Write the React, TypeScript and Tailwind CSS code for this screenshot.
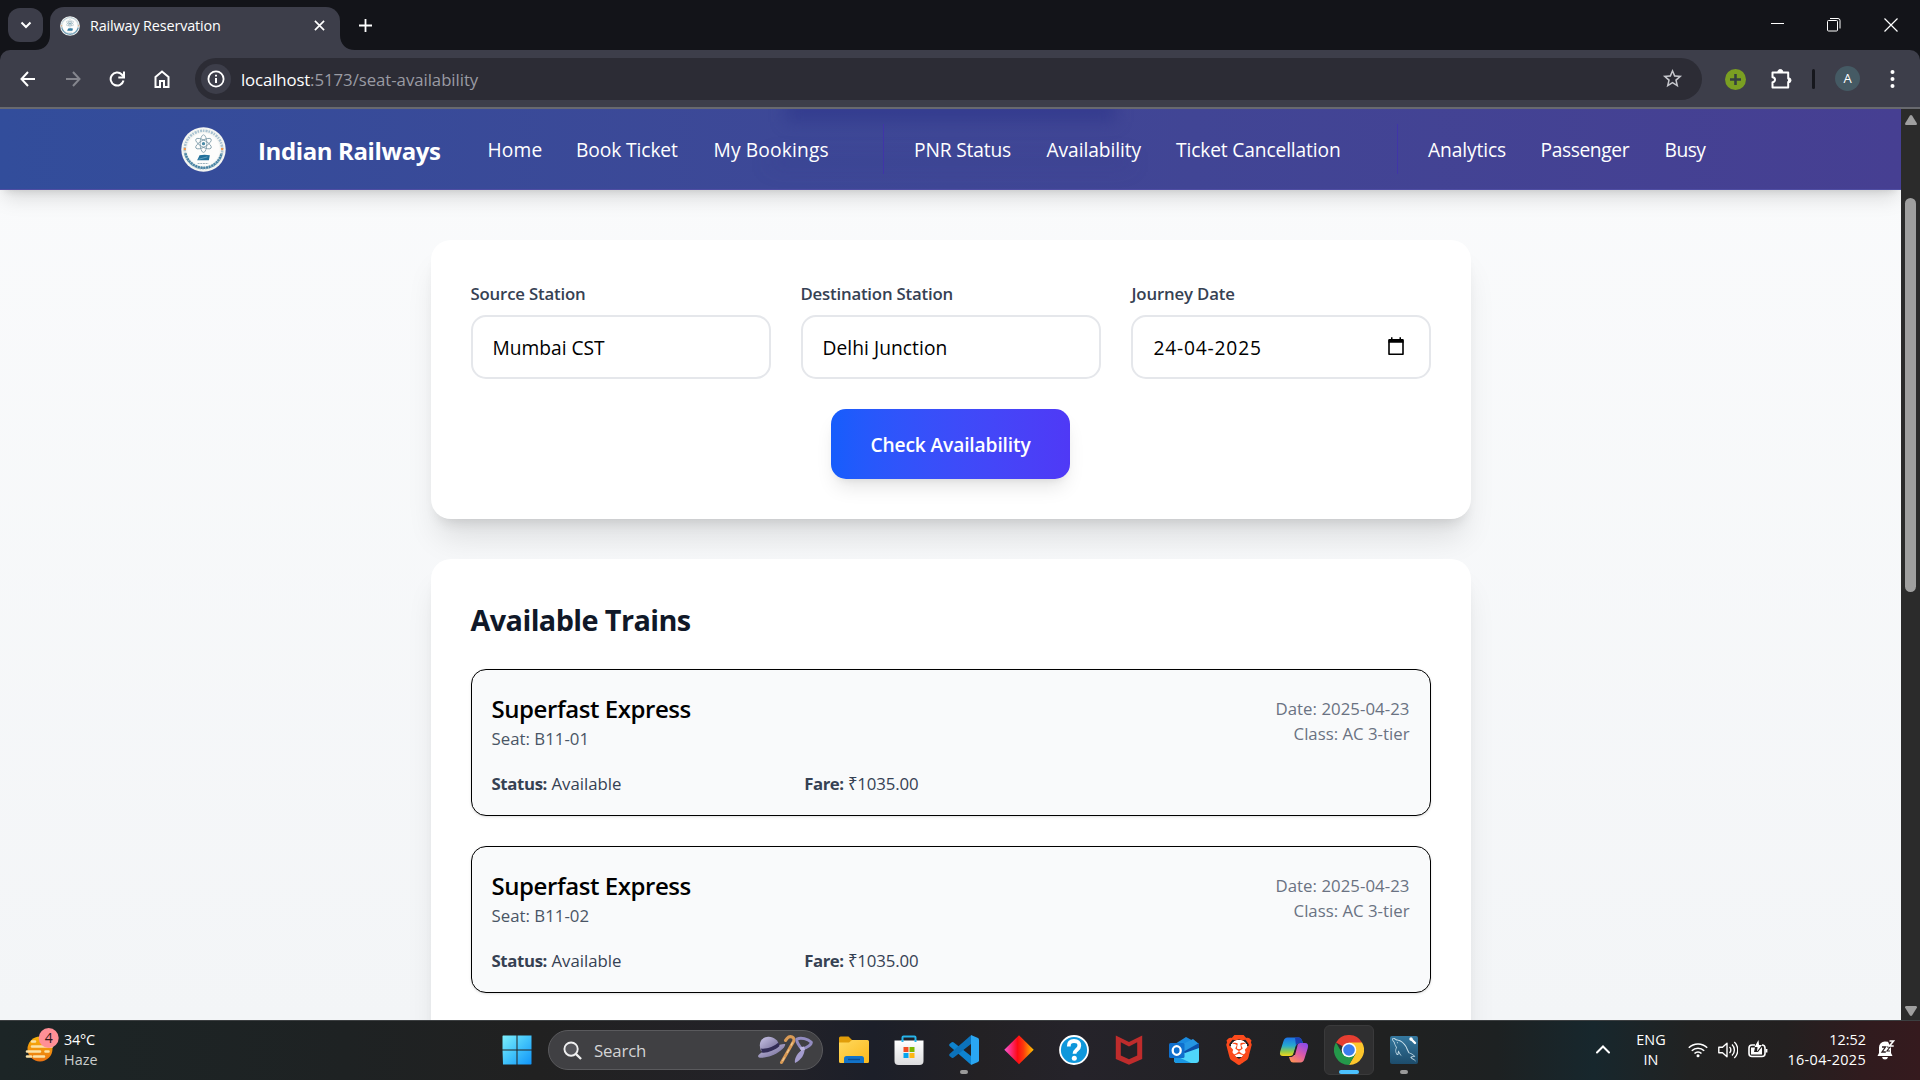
import React from "react";
import { SiBrave } from "react-icons/si";
import { GrMysql } from "react-icons/gr";
import { MdStarBorder } from "react-icons/md";

function Seal({ className }: { className: string }) {
  return (
    <svg viewBox="0 0 46 46" className={className}>
      <circle cx="23" cy="23" r="22.7" fill="#f4f5f2" />
      <circle cx="23" cy="23" r="19.2" fill="none" stroke="#4e86a8" strokeWidth="2.600" strokeDasharray="1.5 1.1 2.2 .9" pathLength="120" strokeDashoffset="-4" opacity=".45" />
      <circle cx="23" cy="23" r="16.6" fill="#fdfdfc" />
      <path d="M4.500 27a19 19 0 0 0 37 0" fill="none" stroke="#2f7398" strokeWidth="2.600" strokeDasharray="2 .8" opacity=".85" />
      <circle cx="3.9" cy="22.5" r="1.3" fill="#f0954a" />
      <circle cx="42.1" cy="22.5" r="1.3" fill="#f0954a" />
      <g fill="none" stroke="#7897a5" strokeWidth=".8">
        <ellipse cx="23" cy="17" rx="3.4" ry="9" />
        <ellipse cx="23" cy="17" rx="3.4" ry="9" transform="rotate(60 23 17)" />
        <ellipse cx="23" cy="17" rx="3.4" ry="9" transform="rotate(-60 23 17)" />
      </g>
      <circle cx="23" cy="17" r="1.7" fill="#4a8aa6" />
      <path d="M19 29l5-.6 5.5.4-1 5.2H16.5z" fill="#22709a" />
      <path d="M18 33l9-2.5" stroke="#8cc0d8" strokeWidth=".6" />
      <path d="M17 37.3h11" stroke="#9db3bd" strokeWidth="1.2" strokeDasharray="2 .7" />
    </svg>
  );
}

function TabStrip() {
  return (
    <div className="flex h-[50px] bg-[#131419]">
      <div className="ml-2 mt-2 flex h-[34px] w-[35px] items-center justify-center rounded-[12px] bg-[#3c3d49]">
        <svg viewBox="0 0 12 8" className="h-[8px] w-[12px]" fill="none" stroke="#fff" strokeWidth="2"><path d="M1.5 1.5L6 6l4.500-4.500" /></svg>
      </div>
      <svg viewBox="0 0 15 15" className="-ml-[8px] mt-[35px] h-[15px] w-[15px]" fill="#3d3e4a"><path d="M15 0v15H0C9 15 15 9 15 0z" /></svg>
      <div className="mt-[7px] flex h-[43px] w-[290px] items-center rounded-t-[14px] bg-[#3d3e4a] pb-[6px]">
        <Seal className="ml-[10px] h-5 w-5" />
        <span className="ml-[10px] w-[224px] text-[14.4px] tracking-[-0.010em] text-white">Railway Reservation</span>
        <svg viewBox="0 0 12 12" className="h-[11px] w-[11px]" stroke="#fff" strokeWidth="1.8"><path d="M1 1l10 10M11 1L1 11" /></svg>
      </div>
      <svg viewBox="0 0 15 15" className="mt-[35px] h-[15px] w-[15px]" fill="#3d3e4a"><path d="M0 0v15h15C6 15 0 9 0 0z" /></svg>
      <svg viewBox="0 0 13 13" className="ml-[4px] mt-[19px] h-[13px] w-[13px]" stroke="#fff" strokeWidth="1.8"><path d="M6.500 0v13M0 6.500h13" /></svg>
      <div className="ml-auto mr-[22px] flex pt-[18px]">
        <svg viewBox="0 0 14 14" className="mr-[42px] h-[14px] w-[14px]" stroke="#fff" strokeWidth="1"><path d="M0 5.500h13" /></svg>
        <svg viewBox="0 0 14 14" className="mr-[43px] h-[14px] w-[14px]" fill="none" stroke="#fff" strokeWidth="1"><rect x=".5" y="2.500" width="10" height="10.500" rx="1" /><path d="M3 .5h8q2 0 2 2v8" /></svg>
        <svg viewBox="0 0 14 14" className="h-[14px] w-[14px]" stroke="#fff" strokeWidth="1.2"><path d="M.5.5l13 13M13.500.5l-13 13" /></svg>
      </div>
    </div>
  );
}

function Toolbar() {
  return (
    <div className="h-[59px] bg-[#131419]">
      <div className="flex h-[59px] items-center rounded-t-[10px] border-b-2 border-[#68696f] bg-[#3d3e4a] text-white">
        <svg viewBox="0 0 16 16" className="ml-[20px] h-[16px] w-[16px]" fill="none" stroke="#fff" strokeWidth="2"><path d="M15 8H1.500M8 1L1.500 8 8 15" /></svg>
        <svg viewBox="0 0 16 16" className="ml-[29px] h-[16px] w-[16px]" fill="none" stroke="#85868e" strokeWidth="2"><path d="M1 8h13.500M8 1l6.500 7L8 15" /></svg>
        <svg viewBox="0 0 16 16" className="ml-[28px] h-[16px] w-[16px]" fill="none" stroke="#fff" strokeWidth="2"><path d="M14.500 9.500A6.500 6.500 0 1 1 12.800 3.500L14.500 5.500" /><path d="M15 .5v6H9.300" /></svg>
        <svg viewBox="0 0 16 18" className="ml-[29px] h-[18px] w-[16px]" fill="none" stroke="#fff" strokeWidth="2"><path d="M1.500 7L8 1.500 14.500 7v10H10v-6H6v6H1.500z" /></svg>
        <div className="ml-[25px] flex h-[42px] w-[1507px] items-center rounded-full bg-[#2c2c35] pl-[6px]">
          <div className="flex h-[30px] w-[30px] items-center justify-center rounded-full bg-[#3d3e4a]">
            <svg viewBox="0 0 18 18" className="h-[18px] w-[18px]" fill="none" stroke="#fff" strokeWidth="1.800"><circle cx="9" cy="9" r="7.600" /><path d="M9 8v5M9 4.800v1.800" strokeWidth="2" /></svg>
          </div>
          <span className="ml-[10px] mt-[2px] text-[16.800px] tracking-[-0.003em] text-[#9a9ba3]"><span className="tracking-[-0.008em] text-white">localhost</span>:5173/seat-availability</span>
          <MdStarBorder className="ml-auto mr-[18px] h-[23px] w-[23px] text-[#c6c7cc]" />
        </div>
        <div className="ml-[23px] mt-[1px] flex h-[21px] w-[21px] items-center justify-center rounded-full bg-[#7a9f22]">
          <svg viewBox="0 0 12 12" className="h-[11px] w-[11px]" stroke="#34403f" strokeWidth="2.800"><path d="M6 0v12M0 6h12" /></svg>
        </div>
        <svg viewBox="0 0 21 21" className="mb-[1px] ml-[25px] h-[21px] w-[21px]"><path d="M1.500 4.500h15.700v6a2.200 2.200 0 0 1 0 3.500v5.500H1.500v-5.200a2.400 2.400 0 0 0 0-5z" fill="none" stroke="#fff" strokeWidth="2" strokeLinejoin="round" /><path d="M6.800 4a2.500 2.500 0 0 1 5 0z" fill="#fff" stroke="#fff" /><path d="M17.500 9.800a2.500 2.500 0 0 1 0 5z" fill="#fff" stroke="#fff" /></svg>
        <div className="ml-[20px] h-5 w-[3px] rounded bg-[#16171d]" />
        <div className="ml-[20px] flex h-[25px] w-[25px] items-center justify-center rounded-full bg-[#455a64] text-[13px] leading-none text-white">A</div>
        <svg viewBox="0 0 5 18" className="ml-[30px] h-[18px] w-[5px]" fill="#fff"><circle cx="2.500" cy="2" r="2" /><circle cx="2.500" cy="9" r="2" /><circle cx="2.500" cy="16" r="2" /></svg>
      </div>
    </div>
  );
}

function NavBar() {
  return (
    <header className="relative z-10 h-[81px] shrink-0 border-b border-[#4f4da3] bg-linear-to-r from-[#324d9b] via-[#3f4796] to-[#463f92] shadow-[0_12px_19px_-4px_rgba(0,0,0,0.13),0_5px_8px_-5px_rgba(0,0,0,0.14)]">
      <div className="absolute inset-0 overflow-hidden">
        <div className="absolute -top-[12px] left-[786px] h-[25px] w-[330px] bg-[#2a3187]/50 blur-[8px]" />
        <div className="absolute left-[770px] top-[48px] h-[10px] w-[360px] bg-[#2f3488]/20 blur-[10px]" />
      </div>
      <nav className="relative flex h-[80px] items-center text-[19.200px] font-medium leading-[30px] text-white">
        <Seal className="ml-[181px] h-[45px] w-[45px]" />
        <span className="ml-[32px] w-[229.500px] pt-[3px] text-[24px] font-bold tracking-[-0.016em] text-white">Indian Railways</span>
        <span className="w-[88.500px] pt-[2px] tracking-[0.009em]">Home</span>
        <span className="w-[137.500px] pt-[2px] tracking-[-0.005em]">Book Ticket</span>
        <span className="w-[169.500px] pt-[2px] tracking-[0.008em]">My Bookings</span>
        <span className="h-[50px] w-px bg-[#4035a8]" />
        <span className="ml-[30px] w-[132.500px] pt-[2px] tracking-[-0.008em]">PNR Status</span>
        <span className="w-[129.500px] pt-[2px] tracking-[-0.004em]">Availability</span>
        <span className="w-[221px] pt-[2px] tracking-[-0.007em]">Ticket Cancellation</span>
        <span className="h-[50px] w-px bg-[#4035a8]" />
        <span className="ml-[30px] w-[112.500px] pt-[2px] tracking-[-0.006em]">Analytics</span>
        <span className="w-[124px] pt-[2px] tracking-[-0.020em]">Passenger</span>
        <span className="pt-[2px] tracking-[-0.025em]">Busy</span>
      </nav>
    </header>
  );
}

function Field({ label, value, labelClass, valueClass, calendar }: { label: string; value: string; labelClass: string; valueClass: string; calendar?: boolean }) {
  return (
    <div>
      <div className={`mb-[10px] h-[25px] text-[16.800px] font-semibold leading-[27px] text-[#364153] ${labelClass}`}>{label}</div>
      <div className="flex h-[64px] items-center justify-between rounded-[15px] border-2 border-[#e5e7eb] pl-[20px] pr-[25px] text-[19.200px] text-black">
        <span className={`pt-[2px] ${valueClass}`}>{value}</span>
        {calendar && (
          <svg viewBox="0 0 16 19" className="mb-[1px] h-[19px] w-[16px]"><path d="M1 3.500h14v13.700H1z" fill="none" stroke="#000" strokeWidth="1.600" strokeLinejoin="round" /><path d="M.5 2h15v3.800H.5zM3 .3h1.500v3H3zM11.500.3H13v3h-1.500z" fill="#000" /></svg>
        )}
      </div>
    </div>
  );
}

function TrainCard({ seat }: { seat: string }) {
  return (
    <div className="h-[147px] shrink-0 rounded-[15px] border border-black bg-[#f9fafb] px-[20px] pt-[21px] shadow-sm">
      <div className="flex items-center justify-between">
        <div>
          <div className="text-[24px] font-semibold leading-[35px] tracking-[-0.018em] text-black">Superfast Express</div>
          <div className="text-[16.800px] leading-[25px] tracking-[0.001em] text-[#4a5565]">Seat: {seat}</div>
        </div>
        <div className="text-right text-[16.800px] leading-[25px] text-[#6a7282]">
          <div className="tracking-[0.003em]">Date: 2025-04-23</div>
          <div>Class: AC 3-tier</div>
        </div>
      </div>
      <div className="mt-5 grid grid-cols-3 gap-[20px] text-[16.800px] leading-[25px] text-[#364153]">
        <div><span className="font-bold tracking-[-0.022em]">Status:</span> Available</div>
        <div className="tracking-[-0.007em]"><span className="font-bold tracking-[-0.026em]">Fare:</span> ₹1035.00</div>
      </div>
    </div>
  );
}

function Scrollbar() {
  return (
    <div className="flex w-[19px] shrink-0 flex-col items-center bg-[#2b2b2b]">
      <svg viewBox="0 0 12 10" className="mt-[6px] h-[10px] w-[12px]" fill="#9f9f9f"><path d="M6 0q.7 0 1.200.8L12 8.500Q12 10 11 10H1Q0 10 0 8.500L4.800.8Q5.300 0 6 0z" /></svg>
      <div className="mt-[73px] h-[394px] w-[11px] rounded-full bg-[#9f9f9f]" />
      <svg viewBox="0 0 12 10" className="mb-[4px] mt-auto h-[10px] w-[12px]" fill="#9f9f9f"><path d="M6 10q.7 0 1.200-.8L12 1.500Q12 0 11 0H1Q0 0 0 1.500l4.800 7.700Q5.300 10 6 10z" /></svg>
    </div>
  );
}

function Page() {
  return (
    <div className="flex h-[911px]">
      <div className="flex w-[1901px] flex-col overflow-hidden bg-linear-to-b from-[#fafbfc] to-[#f3f5f7]">
        <NavBar />
        <main className="mx-auto flex w-[1040px] flex-col gap-[40px] pt-[50px]">
          <section className="h-[279px] shrink-0 rounded-[20px] bg-white p-[40px] shadow-[0_25px_31px_-6px_rgba(0,0,0,0.1),0_10px_13px_-7px_rgba(0,0,0,0.12)]">
            <div className="grid grid-cols-3 gap-[30px]">
              <Field label="Source Station" value="Mumbai CST" labelClass="tracking-[-0.011em]" valueClass="" />
              <Field label="Destination Station" value="Delhi Junction" labelClass="tracking-[-0.012em]" valueClass="tracking-[0.003em]" />
              <Field label="Journey Date" value="24-04-2025" labelClass="pl-[1px] tracking-[-0.010em]" valueClass="pl-[1px] tracking-[0.042em]" calendar />
            </div>
            <div className="mt-[30px] flex justify-center">
              <button className="h-[70px] w-[239px] rounded-[15px] bg-linear-to-r from-[#155dfc] to-[#4f39f6] pt-[2px] text-[19.200px] font-semibold tracking-[-0.007em] text-white shadow-[0_12px_19px_-4px_rgba(0,0,0,0.1),0_5px_8px_-5px_rgba(0,0,0,0.1)]">Check Availability</button>
            </div>
          </section>
          <section className="flex h-[640px] shrink-0 flex-col gap-[30px] rounded-[20px] bg-white p-[40px] shadow-[0_25px_31px_-6px_rgba(0,0,0,0.1),0_10px_13px_-7px_rgba(0,0,0,0.1)]">
            <h2 className="h-[40px] text-[28.800px] font-bold leading-[42px] tracking-[-0.020em] text-[#101828]">Available Trains</h2>
            <TrainCard seat="B11-01" />
            <TrainCard seat="B11-02" />
          </section>
        </main>
      </div>
      <Scrollbar />
    </div>
  );
}

function AppCell({ children, state }: { children: React.ReactNode; state?: "open" | "active" }) {
  return (
    <div className="flex w-[55px] justify-center pt-[4px]">
      <div className={`flex h-[50px] w-[50px] flex-col items-center rounded-[6px] ${state === "active" ? "border border-[#3a3a3b] bg-[#2f2f30] pt-[9px]" : "pt-[10px]"}`}>
        <div className="h-[30px] w-[30px]">{children}</div>
        {state === "open" && <div className="mt-[5px] h-[4px] w-[8px] rounded-full bg-[#9a9a9a]" />}
        {state === "active" && <div className="mt-[5px] h-[4px] w-[20px] shrink-0 rounded-full bg-[#4cc2ff]" />}
      </div>
    </div>
  );
}

function StartIcon() {
  return (
    <svg viewBox="0 0 30 30" className="h-full w-full">
      <defs><linearGradient id="win" gradientUnits="userSpaceOnUse" x1="0" y1="0" x2="30" y2="30"><stop offset="0" stopColor="#7ff0fb" /><stop offset=".5" stopColor="#41c3fb" /><stop offset="1" stopColor="#0f93f8" /></linearGradient></defs>
      <path d="M1 .5h13.500v14H.5V1zM15.500.5h14v14h-14zM.5 15.500h14v14H1zM15.500 15.500h14v13.500l-.5.5H15.500z" fill="url(#win)" />
    </svg>
  );
}

function SearchArt() {
  return (
    <svg viewBox="0 0 56 30" className="h-[30px] w-[56px]">
      <defs><linearGradient id="hat" x1="0" y1="0" x2="1" y2="1"><stop offset="0" stopColor="#c9c3e6" /><stop offset="1" stopColor="#6d6691" /></linearGradient></defs>
      <path d="M1 21C2 17 24 8 28 9c1.500 2-6 9-13 11.500C8 23 1 24 1 21z" fill="url(#hat)" />
      <path d="M4 16C1 8 4 3 10 2s11 3 12 8c-4 4-12 8-18 6z" fill="url(#hat)" />
      <path d="M4 13.500c5 1 13-2 17.500-6l1 3.500C18 15.500 9 18.500 5 17.500z" fill="#322c55" />
      <path d="M24.500 27.500L36.500 6.500C38.500 2 33 0 30 3.500l-1.500 2" fill="none" stroke="#d99a55" strokeWidth="3" strokeLinecap="round" />
      <path d="M25.500 26l2-3.500M30 18l2-3.500M34 10.500l1.500-3" stroke="#f3cb94" strokeWidth="1.200" />
      <path d="M40 4c4-2 11 0 14 3 1.500 2-4 6-9 7-3-3-6-8-5-10z" fill="none" stroke="#938cc0" strokeWidth="3" />
      <path d="M42.500 12.500l4.500-1 1 3.500-3.500 1.500z" fill="#bdb6e0" />
      <path d="M43.500 16l4-1c0 4-3 10-9.500 13-1-4 2-9 5.500-12z" fill="#a49cce" />
    </svg>
  );
}

function VsCodeIcon() {
  return (
    <svg viewBox="0 0 30 30" className="h-full w-full">
      <path d="M.5 11Q-.2 9.800.8 8.800L2.800 7.200q1-.6 2 .2L22 21v8.700L.5 11z" fill="#0e83cf" />
      <path d="M.5 19Q-.2 20.200.8 21.200l2 1.600q1 .6 2-.2L22 9V.3L.5 19z" fill="#0c72bb" />
      <path d="M22 0l7 3q1 .5 1 1.800v20.400q0 1.300-1 1.800l-7 3z" fill="#2aa6f2" />
    </svg>
  );
}

function Taskbar() {
  return (
    <footer className="flex h-[60px] border-t border-[#3c3f41] bg-[linear-gradient(90deg,#1c2526_0%,#1e2223_18%,#212121_28%,#232228_40%,#1c1f29_45.500%,#232124_51%,#25232a_56%,#202121_72%,#1d2122_78%,#17272d_83%,#212222_88%,#232020_93%,#301b1e_97%,#351a1e_100%)] text-[14.400px] leading-[20px] text-white">
      <div className="flex w-[490px]">
        <svg viewBox="0 0 36 36" className="ml-[24px] mt-[6px] h-[36px] w-[36px]">
          <defs><linearGradient id="sun" x1="0" y1="0" x2="0" y2="1"><stop offset="0" stopColor="#f8b40a" /><stop offset="1" stopColor="#ea7312" /></linearGradient></defs>
          <circle cx="16" cy="22" r="12.500" fill="url(#sun)" />
          <g stroke="#fbe2a6" strokeWidth="2.600" strokeLinecap="round"><path d="M8 14.500h3M8 19.500h20M3 24.500h13M21.500 24.500h3M3 29.500h4M10 29.500h10" /></g>
          <circle cx="24.700" cy="11" r="10" fill="#ff8f96" />
          <text x="24.700" y="16" textAnchor="middle" fontSize="14" fill="#2b1517" fontFamily="Open Sans, sans-serif">4</text>
        </svg>
        <div className="ml-[4px] mt-[9px]">
          <div className="tracking-[-0.014em]">34°C</div>
          <div className="tracking-[0.005em] text-[#c9cccc]">Haze</div>
        </div>
      </div>
      <div className="flex w-[55px] justify-center pr-[1px] pt-[14px]"><div className="h-[30px] w-[30px]"><StartIcon /></div></div>
      <div className="ml-[3px] mt-[9px] flex h-[40px] w-[275px] items-center rounded-full border border-[#5a5a5d] bg-[#404043] pl-[14px]">
        <svg viewBox="0 0 20 20" className="h-[19px] w-[19px]" fill="none" stroke="#f0f0f0" strokeWidth="2"><circle cx="8.500" cy="8.500" r="7" fill="#55555a" /><path d="M13.500 13.500l5.500 5.500" strokeWidth="2.400" /></svg>
        <span className="ml-[12px] mt-[1px] w-[163px] text-[16.800px] tracking-[-0.010em] text-[#d4d4d6]">Search</span>
        <SearchArt />
      </div>
      <div className="ml-[3.500px] flex">
        <AppCell>
          <svg viewBox="0 0 30 30" className="h-full w-full"><defs><linearGradient id="fold" x1="0" y1="0" x2="1" y2="1"><stop offset="0" stopColor="#ffd95e" /><stop offset="1" stopColor="#fbb91c" /></linearGradient></defs><path d="M0 3q0-1.500 1.500-1.500h8L13 5v6H0z" fill="#e19d09" /><path d="M0 7.500h10L13 5h15.500Q30 5 30 6.500v20Q30 28 28.500 28h-27Q0 28 0 26.500z" fill="url(#fold)" /><path d="M5 28v-4.500Q5 21 7.500 21h15q2.500 0 2.500 2.500V28z" fill="#1273c9" /><path d="M9 24.500h12" stroke="#0a4d93" strokeWidth="1.400" /></svg>
        </AppCell>
        <AppCell>
          <svg viewBox="0 0 30 30" className="h-full w-full"><defs><linearGradient id="bag" x1="0" y1="0" x2="0" y2="1"><stop offset="0" stopColor="#fff" /><stop offset="1" stopColor="#dcdcde" /></linearGradient></defs><path d="M8.500 7V2.500Q8.500 1.500 9.500 1.500h11q1 0 1 1V7" fill="none" stroke="#27b4ea" strokeWidth="2" /><path d="M.5 5.500h29V26q0 4-4 4h-21q-4 0-4-4z" fill="url(#bag)" /><path d="M9.500 12h5v5h-5z" fill="#f04e23" /><path d="M15.500 12h5v5h-5z" fill="#7db700" /><path d="M9.500 18h5v5h-5z" fill="#05a4ef" /><path d="M15.500 18h5v5h-5z" fill="#fdb713" /><path d="M8.500 5v2M21.500 5v2" stroke="#27b4ea" strokeWidth="2" /></svg>
        </AppCell>
        <AppCell state="open"><VsCodeIcon /></AppCell>
        <AppCell>
          <svg viewBox="0 0 30 30" className="h-full w-full"><defs><linearGradient id="dia" x1="0" x2="1"><stop offset="0" stopColor="#f95bd0" /><stop offset=".2" stopColor="#fb2f86" /><stop offset=".45" stopColor="#fe0a14" /><stop offset=".65" stopColor="#fd3a0c" /><stop offset="1" stopColor="#ffc400" /></linearGradient></defs><path d="M15 .3L29.700 14.700 15 29.300.3 14.700z" fill="url(#dia)" /></svg>
        </AppCell>
        <AppCell>
          <svg viewBox="0 0 30 30" className="h-full w-full"><circle cx="15" cy="15" r="14" fill="#0f97db" stroke="#fff" strokeWidth="1.800" /><path d="M9.800 11.500Q9.500 6 15 6t5.300 4.800c0 4-4.800 4-4.800 8" fill="none" stroke="#fff" strokeWidth="3.800" /><circle cx="15.300" cy="23.300" r="2.500" fill="#fff" /></svg>
        </AppCell>
        <AppCell>
          <svg viewBox="0 0 30 30" className="h-full w-full"><path d="M1.800.5L15 7 28.200.5V24L15 29.800 1.800 24z" fill="#bf2c2c" /><path d="M6.800 7.200L15 11.500l8.200-4.300v13.300L15 24.300l-8.200-3.800z" fill="#232127" /></svg>
        </AppCell>
        <AppCell>
          <svg viewBox="0 0 30 30" className="h-full w-full"><path d="M6 9L17 2l13 7v10H6z" fill="#1a8be0" /><path d="M12 10l12-6 6 5-14 10z" fill="#2596e3" /><path d="M14 17l16-9v6l-9 6z" fill="#0b4fa8" /><path d="M5 18h11l14-5v12q0 3-3 3H8q-3 0-3-3z" fill="#4fd6fb" /><path d="M5 20l17 8H8q-3 0-3-3z" fill="#1a97e4" /><rect x="0" y="8" width="15.500" height="15" rx="1.500" fill="#0f6fcd" /><ellipse cx="7.700" cy="15.500" rx="4" ry="4.300" fill="none" stroke="#fff" strokeWidth="2.300" /></svg>
        </AppCell>
        <AppCell>
          <div className="flex h-full w-full items-center justify-center bg-[radial-gradient(circle_at_50%_45%,#fff_0_8.500px,transparent_9px)]"><SiBrave className="h-[30px] w-[30px] text-[#fb4a1c]" /></div>
        </AppCell>
        <AppCell>
          <svg viewBox="0 0 30 30" className="h-full w-full"><defs><linearGradient id="cpl" x1="0" y1="0" x2="0" y2="1"><stop offset="0" stopColor="#1d72e6" /><stop offset=".45" stopColor="#27a9cf" /><stop offset=".75" stopColor="#8fcb4c" /><stop offset="1" stopColor="#f5d61c" /></linearGradient><linearGradient id="cpr" x1=".8" y1="0" x2=".2" y2="1"><stop offset="0" stopColor="#8b4bea" /><stop offset=".5" stopColor="#dc5aa8" /><stop offset="1" stopColor="#ff9155" /></linearGradient></defs><path d="M8.500 2.500H20q2 0 3 3L24 8h-3q-3 0-4 3l-2.500 8Q13.500 21 11 21H4Q0 21 1.200 16.500L4.500 6Q5.500 2.500 8.500 2.500z" fill="url(#cpl)" /><path d="M21.500 27.500H14q-2 0-3-2.500l-1-3h2.500q2 0 3-3l2.500-8q.8-3 3-3h5Q30 8 28.800 13l-3.300 10.500Q24.500 27.500 21.500 27.500z" fill="url(#cpr)" /><path d="M16 2.500h4q2 0 3 3L24 8h-3q-3 0-4 3z" fill="#1b3fb4" /><path d="M18.500 10.500h-1.500l-3 9.500h2z" fill="#232127" /></svg>
        </AppCell>
        <AppCell state="active">
          <svg viewBox="0 0 30 30" className="h-full w-full"><path d="M15 15L2 7.500A15 15 0 0 1 28 7.500z" fill="#e63e31" /><path d="M15 7.500h13A15 15 0 0 1 15 30l6.500-11.300z" fill="#fdc62c" /><path d="M8.500 18.700L2 7.500A15 15 0 0 0 15 30l6.500-11.300z" fill="#24984a" /><circle cx="15" cy="15" r="7.300" fill="#fff" /><circle cx="15" cy="15" r="5.800" fill="#3b7ded" /></svg>
        </AppCell>
        <AppCell state="open">
          <div className="flex h-full w-full items-center justify-center">
            <div className="relative flex h-[28px] w-[28px] items-center justify-center rounded-[2px] bg-linear-to-b from-[#35789f] to-[#1d4c6b]">
              <GrMysql className="h-[24px] w-[24px] text-[#c8dfea]" />
              <svg viewBox="0 0 8 8" className="absolute right-[1px] top-[1px] h-[8px] w-[8px]"><path d="M2 2l4 4" stroke="#fff" strokeWidth="2.400" strokeLinecap="round" /><circle cx="2" cy="2" r="1.700" fill="#fff" /></svg>
            </div>
          </div>
        </AppCell>
      </div>
      <div className="ml-auto flex pr-[25px]">
        <svg viewBox="0 0 14 9" className="mt-[24px] h-[9px] w-[14px]" fill="none" stroke="#fff" strokeWidth="2" strokeLinecap="round"><path d="M1 7.500l6-6 6 6" /></svg>
        <div className="ml-[26px] mt-[9px] w-[30px] text-center"><div>ENG</div><div>IN</div></div>
        <svg viewBox="0 0 20 16" className="ml-[22px] mt-[21px] h-[16px] w-[20px]" fill="none" stroke="#fff" strokeWidth="1.600"><path d="M.8 5.800a13 13 0 0 1 18.400 0M3.800 8.800a8.800 8.800 0 0 1 12.400 0M6.500 11.500a5 5 0 0 1 7 0" /><circle cx="10" cy="13.800" r="1.500" fill="#fff" stroke="none" /></svg>
        <svg viewBox="0 0 20 18" className="ml-[10px] mt-[20px] h-[18px] w-[20px]" fill="none" stroke="#fff" strokeWidth="1.400" strokeLinejoin="round"><path d="M.8 6.200h3.700L9 2.200v13.600l-4.500-4H.8zM11.500 6a4 4 0 0 1 0 6M14 3.500a7.500 7.500 0 0 1 0 11M16.300 1a11 11 0 0 1 0 16" /></svg>
        <svg viewBox="0 0 20 18" className="ml-[10px] mt-[19px] h-[18px] w-[20px]"><path d="M7 5H4Q1 5 1 8v5.500q0 3 3 3h10q3 0 3-3V8q0-3-3-3" fill="none" stroke="#fff" strokeWidth="1.600" /><path d="M3 7.500h4L6 12h4l4-5v7.500H3z" fill="#fff" /><path d="M10.500 0L6.500 7h3l-.5 4.500L14 5h-3z" fill="#fff" /><path d="M18.500 9v3.500" stroke="#fff" strokeWidth="1.800" /></svg>
        <div className="mt-[9px] w-[98px] text-right"><div>12:52</div><div className="tracking-[0.024em]">16-04-2025</div></div>
        <svg viewBox="0 0 18 20" className="ml-[11px] mt-[19px] h-[20px] w-[18px]"><path d="M8 1.500A5.800 5.800 0 0 0 2 7.500V13L.5 16h15L14 13V8L11 1.800zM5 17h6q-.5 2.500-3 2.500T5 17z" fill="#fff" /><path d="M5 7h3.500L5 12h3.800" fill="none" stroke="#2b1d1f" strokeWidth="1.300" /><path d="M10 7h3L10 11h3" fill="none" stroke="#2b1d1f" strokeWidth="1.100" /><path d="M12.500 1h4L12.500 6h4.200" fill="none" stroke="#fff" strokeWidth="1.600" /></svg>
      </div>
    </footer>
  );
}

export default function App() {
  return (
    <div className="h-[1080px] w-[1920px] overflow-hidden font-['Open_Sans','Noto_Sans',sans-serif]">
      <TabStrip />
      <Toolbar />
      <Page />
      <Taskbar />
    </div>
  );
}
